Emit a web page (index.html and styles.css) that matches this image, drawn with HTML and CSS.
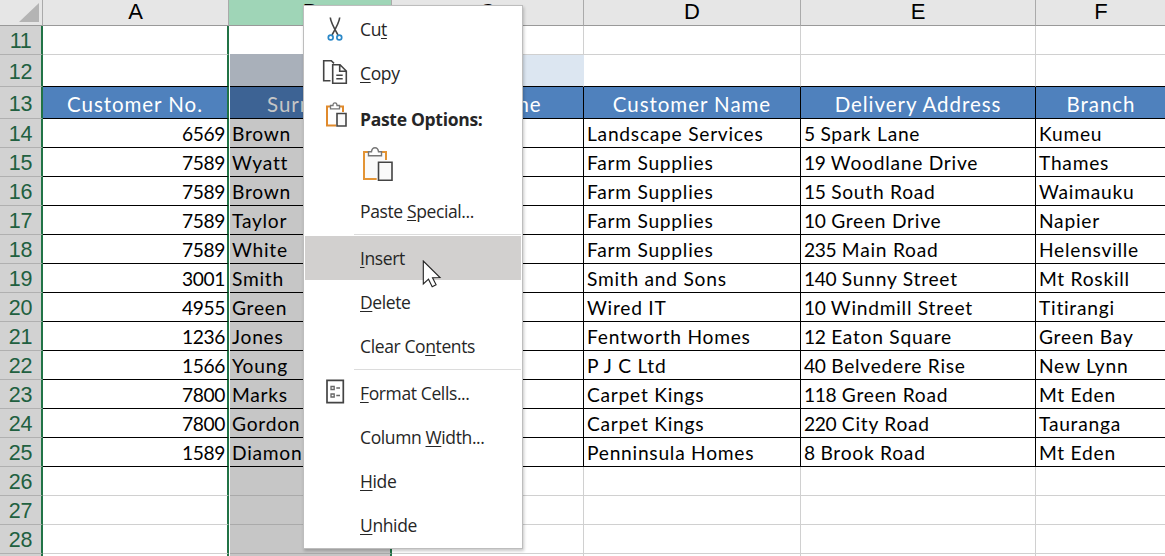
FILE: index.html
```html
<!DOCTYPE html>
<html lang="en">
<head>
<meta charset="utf-8">
<title>Customers</title>
<link rel="stylesheet" href="styles.css">
</head>
<body>
<div class="sheet" id="sheet">
  <div class="row letters">
    <div class="corner"><svg width="42" height="25"><path d="M39 3V22H19Z" fill="#b4b4b4"/></svg></div>
    <div>A</div><div class="picked">B</div><div>C</div><div>D</div><div>E</div><div>F</div>
  </div>
</div>

<div class="menu">
  <div class="item raised"><span class="icon"><svg width="30" height="34" viewBox="0 0 30 34" fill="none"><path d="M10.3 5.5Q10.5 10 18 23M19.7 5.5Q19.5 10 12 23" stroke="#444" stroke-width="1.6"/><circle cx="10.7" cy="25.5" r="2.4" stroke="#2b88c8" stroke-width="1.7"/><circle cx="19.3" cy="25.5" r="2.4" stroke="#2b88c8" stroke-width="1.7"/></svg></span><span>Cu<u>t</u></span></div>
  <div class="item raised"><span class="icon"><svg width="30" height="34" viewBox="0 0 30 34" fill="none" stroke="#444" stroke-width="1.6"><path d="M10.5 24.7H3.7V4.7H11.3L14 7.3"/><path d="M12.7 8.7H20L26.3 15V27.3H12.7ZM19.7 8.7V15.3H26.3M16.3 19.3H22.7M16.3 22.7H22.7"/></svg></span><span><u>C</u>opy</span></div>
  <div class="item heading"><span class="icon"><svg width="30" height="34" viewBox="0 0 30 34" fill="none"><path d="M11 4.5H7V23.5H16M19 4.5H23V10" stroke="#e08a2c" stroke-width="2"/><path d="M10.5 6.8V3.5H13Q13 .8 15 .8T17 3.5H19.5V6.8Z" fill="#fff" stroke="#777" stroke-width="1.3"/><path d="M17 11.5H26V24H17Z" fill="#fafafa" stroke="#444" stroke-width="1.6"/></svg></span><span>Paste Options:</span></div>
  <div class="item paste"><svg width="34" height="38" viewBox="0 0 34 38"><path d="M4 5H26V32H4Z" fill="#fafafa"/><path d="M9 5H4V32H18M21 5H26V13" fill="none" stroke="#e39435" stroke-width="2"/><path d="M8.5 8.8V4.7H11.5Q12 .7 15 .7T18.5 4.7H21.5V8.8Z" fill="#fff" stroke="#777" stroke-width="1.4"/><path d="M16.7 13.7H33V34H16.7Z" fill="#fff"/><path d="M18.5 15.3H32V33.3H18.5Z" fill="#fafafa" stroke="#444" stroke-width="1.6"/></svg></div>
  <div class="item raised"><span class="icon"></span><span>Paste <u>S</u>pecial...</span></div>
  <div class="rule"></div>
  <div class="item hover"><span class="icon"></span><span><u>I</u>nsert</span></div>
  <div class="item"><span class="icon"></span><span><u>D</u>elete</span></div>
  <div class="item"><span class="icon"></span><span>Clear Co<u>n</u>tents</span></div>
  <div class="rule lower"></div>
  <div class="item"><span class="icon"><svg width="30" height="34" viewBox="0 0 30 34" fill="none" stroke="#444"><path d="M7 4.3H23.3V26.7H7Z" stroke-width="1.7"/><path d="M11 10.5H14.2V13.5H11ZM11 18H14.2V21H11ZM16.3 12H20M16.3 19.5H20" stroke="#666" stroke-width="1.3"/></svg></span><span><u>F</u>ormat Cells...</span></div>
  <div class="item"><span class="icon"></span><span>Column <u>W</u>idth...</span></div>
  <div class="item"><span class="icon"></span><span><u>H</u>ide</span></div>
  <div class="item"><span class="icon"></span><span><u>U</u>nhide</span></div>
</div>
<svg class="pointer" width="20" height="30" viewBox="0 0 20 30"><path d="M1.3 1V24L6.5 19.2L10.2 26.7L14.1 24.8L10.5 17.8L18 17.5Z" fill="#fff" stroke="#222" stroke-width="1.1"/></svg>
<script src="sheet.js"></script>
</body>
</html>
```
FILE: styles.css
```css
* { box-sizing: border-box; }
body { margin: 0; width: 1165px; height: 556px; overflow: hidden; position: relative; background: #fff; color: #000; font: 19.2px/24px Lato, sans-serif; }
.sheet { width: 1165px; height: 556px; overflow: hidden; }
.row { display: grid; grid-template-columns: 43px 186px 163px 192px 217px 235px 131px; height: 29px; }
.row > div { border-right: 1px solid #d0d0d0; border-bottom: 1px solid #d0d0d0; display: flex; align-items: center; overflow: hidden; white-space: pre; padding-left: 3px; }
.row > .num { background: #d2d2d2; color: #216040; border-right: 2px solid #217346; border-bottom-color: #b0b0b0; font: 21.5px/24px "Liberation Sans", Arial, sans-serif; letter-spacing: -.3px; justify-content: center; padding: 1px 0 0; }
.row > .a { border-right: 2px solid #217346; justify-content: flex-end; padding-right: 2px; }
.row > .b { margin-left: 1px; padding-left: 2px; background: #c6c6c6; border-right: 2px solid #217346; border-bottom-color: #aaa; }
.row.data > .cell { border-bottom-color: #000; letter-spacing: .75px; padding-top: 2px; }
.row.data > .cell:not(.a):not(.b) { border-right-color: #000; }
.digits { letter-spacing: -.4px; }
.row.first > .b { background: #fff; border-bottom-color: #a9b0ba; }
.row.tall { height: 32px; }
.row.tall > .num, .row.title > .num { padding-top: 3px; }
.row.tall > .b { background: #a9b0ba; }
.row.tall > .c { background: #dce6f1; border-right-color: #dce6f1; }
.row.tall > .cell { border-bottom-color: #000; }
.row.title { height: 32px; }
.row.title > .cell { background: #4f81bd; color: #fff; border-bottom-color: #000; justify-content: center; padding: 2px 0 0; font-size: 20.5px; letter-spacing: .95px; }
.row.title > .cell:not(.a):not(.b) { border-right-color: #000; }
.row.title > .b { background: #3d6394; color: #c6c6c6; }
.row.letters { height: 26px; }
.row.letters > div { background: #e6e6e6; border-bottom-color: #999; border-right-color: #aaa; justify-content: center; font: 22px/24px "Liberation Sans", Arial, sans-serif; padding: 0 0 1px; }
.row.letters > .picked { background: #9fd5b7; }
.row.letters > .corner { justify-content: flex-start; padding: 0; }

.menu { position: absolute; left: 303px; top: 5px; width: 220px; height: 544px; padding: 2px 1px; border: 1px solid #bdbdbd; background: #fff; box-shadow: 1px 2px 3px rgba(0,0,0,.22); color: #262626; font: 17.5px/24px "Open Sans", "Noto Sans", sans-serif; letter-spacing: -.38px; }
.item { display: flex; height: 44px; align-items: center; white-space: nowrap; }
.item.raised { padding-bottom: 2px; }
.icon { width: 55px; height: 34px; padding-left: 15px; flex: none; }
.icon svg { display: block; }
.item u { text-decoration-thickness: 1px; text-underline-offset: 2px; }
.item.heading { height: 46px; font-weight: 700; letter-spacing: -.3px; }
.item.paste { height: 48px; padding-left: 55px; }
.rule { height: 1px; margin: 0 0 1px 49px; background: #dcdcdc; }
.rule.lower { margin-top: 1px; }
.item.hover { background: #d2d0cf; }
.pointer { position: absolute; left: 422px; top: 260px; }
```
FILE: sheet.js
```js
const records = [
  ["6569", "Brown", "", "Landscape Services", "5 Spark Lane", "Kumeu"],
  ["7589", "Wyatt", "", "Farm Supplies", "19 Woodlane Drive", "Thames"],
  ["7589", "Brown", "", "Farm Supplies", "15 South Road", "Waimauku"],
  ["7589", "Taylor", "", "Farm Supplies", "10 Green Drive", "Napier"],
  ["7589", "White", "", "Farm Supplies", "235 Main Road", "Helensville"],
  ["3001", "Smith", "", "Smith and Sons", "140 Sunny Street", "Mt Roskill"],
  ["4955", "Green", "", "Wired IT", "10 Windmill Street", "Titirangi"],
  ["1236", "Jones", "", "Fentworth Homes", "12 Eaton Square", "Green Bay"],
  ["1566", "Young", "", "P J C Ltd", "40 Belvedere Rise", "New Lynn"],
  ["7800", "Marks", "", "Carpet Kings", "118 Green Road", "Mt Eden"],
  ["7800", "Gordon", "", "Carpet Kings", "220 City Road", "Tauranga"],
  ["1589", "Diamon", "", "Penninsula Homes", "8 Brook Road", "Mt Eden"]
];
const titles = ["Customer No.", "Surname", "First Name", "Customer Name", "Delivery Address", "Branch"];
const blank = ["", "", "", "", "", ""];
const sheet = document.getElementById("sheet");

function addRow(number, values, kind) {
  const row = document.createElement("div");
  row.className = "row " + kind;
  const num = document.createElement("div");
  num.className = "num";
  num.textContent = number;
  row.append(num);
  values.forEach((value, i) => {
    const cell = document.createElement("div");
    cell.className = "cell " + "abcdef"[i];
    const [, digits, rest] = value.match(/^(\d*)(.*)$/);
    if (digits) {
      const span = document.createElement("span");
      span.className = "digits";
      span.textContent = digits;
      cell.append(span);
    }
    cell.append(rest);
    row.append(cell);
  });
  sheet.append(row);
}

addRow(11, blank, "first");
addRow(12, blank, "tall");
addRow(13, titles, "title");
records.forEach((record, i) => addRow(14 + i, record, "data"));
for (let n = 26; n <= 28; n++) addRow(n, blank, "empty");
addRow("", blank, "empty");
```
